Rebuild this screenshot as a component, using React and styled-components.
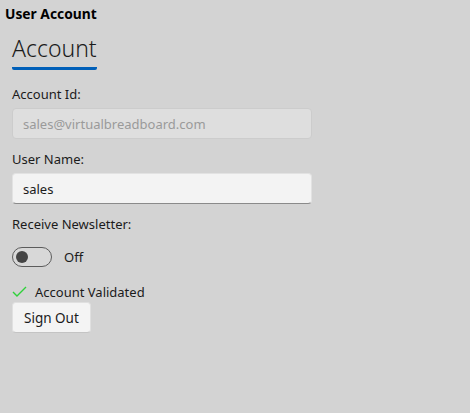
import React, { useState } from "react";
import styled, { createGlobalStyle } from "styled-components";

const GlobalStyle = createGlobalStyle`
  html, body {
    margin: 0;
    padding: 0;
    background: #d3d3d3;
  }
  body {
    font-family: "Noto Sans", "Open Sans", sans-serif;
    color: #1b1b1b;
  }
`;

const Page = styled.div`
  width: 470px;
  height: 413px;
  background: #d3d3d3;
  padding: 5px 0 0 5px;
  box-sizing: border-box;
`;

const WindowTitle = styled.div`
  font-size: 13.8px;
  font-weight: 700;
  line-height: 18px;
  color: #000;
`;

const Form = styled.div`
  display: flex;
  flex-direction: column;
  width: 300px;
  padding: 10px 0 0 7px;
`;

const Heading = styled.h1`
  margin: 0 0 15px;
  align-self: flex-start;
  font-size: 23px;
  font-weight: 300;
  line-height: 30px;
  color: #1b1b1b;
  padding-bottom: 4px;
  border-bottom: 3px solid #005fb8;
  border-radius: 0 0 2px 2px;
`;

const Label = styled.label`
  font-size: 13px;
  line-height: 19px;
  margin-bottom: 4px;
  color: #1b1b1b;
`;

const TextBox = styled.input`
  box-sizing: border-box;
  width: 300px;
  height: 31px;
  padding: 0 10px;
  font-family: inherit;
  font-size: 13px;
  border-radius: 4px;
  outline: none;
  margin: 0 0 11px;
  border: 1px solid ${(p) => (p.disabled ? "#cccccc" : "#e2e2e2")};
  border-bottom-color: ${(p) => (p.disabled ? "#cccccc" : "#8a8a8a")};
  background: ${(p) => (p.disabled ? "#dedede" : "#f3f3f3")};
  color: ${(p) => (p.disabled ? "#9a9a9a" : "#1b1b1b")};
`;

const ToggleRow = styled.div`
  display: flex;
  align-items: center;
  gap: 12px;
  margin: 9px 0 16px;
  font-size: 13px;
`;

const ToggleTrack = styled.button`
  position: relative;
  width: 40px;
  height: 20px;
  padding: 0;
  box-sizing: border-box;
  border-radius: 10px;
  border: 1px solid #5c5c5c;
  background: ${(p) => (p.on ? "#005fb8" : "#d8d8d8")};
  cursor: pointer;
`;

const Knob = styled.span`
  position: absolute;
  top: 3px;
  left: ${(p) => (p.on ? "23px" : "3px")};
  width: 12px;
  height: 12px;
  border-radius: 50%;
  background: ${(p) => (p.on ? "#fff" : "#444")};
`;

const Status = styled.div`
  display: flex;
  align-items: center;
  gap: 8px;
  font-size: 13px;
  line-height: 18px;
  margin-bottom: 1px;
`;

const Button = styled.button`
  align-self: flex-start;
  box-sizing: border-box;
  height: 31px;
  padding: 0 11px;
  font-family: inherit;
  font-size: 13.5px;
  color: #1b1b1b;
  background: #f4f4f4;
  border: 1px solid #e0e0e0;
  border-bottom-color: #c4c4c4;
  border-radius: 4px;
`;

const Check = () => (
  <svg width="15" height="12" viewBox="0 0 15 12">
    <polyline
      points="1,6 5,10 14,1"
      fill="none"
      stroke="#2fd23a"
      strokeWidth="1.4"
    />
  </svg>
);

const App = () => {
  const [on, setOn] = useState(false);
  return (
    <Page>
      <GlobalStyle />
      <WindowTitle>User Account</WindowTitle>
      <Form>
        <Heading>Account</Heading>
        <Label>Account Id:</Label>
        <TextBox disabled value="sales@virtualbreadboard.com" readOnly />
        <Label>User Name:</Label>
        <TextBox defaultValue="sales" />
        <Label>Receive Newsletter:</Label>
        <ToggleRow>
          <ToggleTrack on={on ? 1 : 0} onClick={() => setOn(!on)}>
            <Knob on={on ? 1 : 0} />
          </ToggleTrack>
          <span>{on ? "On" : "Off"}</span>
        </ToggleRow>
        <Status>
          <Check />
          Account Validated
        </Status>
        <Button>Sign Out</Button>
      </Form>
    </Page>
  );
};

export default App;
